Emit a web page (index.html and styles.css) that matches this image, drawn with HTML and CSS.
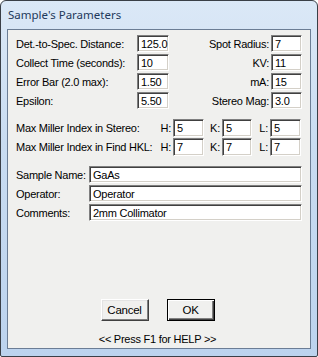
FILE: index.html
```html
<!DOCTYPE html>
<html>
<head>
<meta charset="utf-8">
<link rel="stylesheet" href="styles.css">
</head>
<body>
<div class="window">
  <div class="titlebar">Sample's Parameters</div>
  <div class="client">
    <div class="grid-top">
      <span class="lbl">Det.-to-Spec. Distance:</span><span class="field">125.0</span>
      <span class="lbl rlbl">Spot Radius:</span><span class="field">7</span>
      <span class="lbl">Collect Time (seconds):</span><span class="field">10</span>
      <span class="lbl rlbl">KV:</span><span class="field">11</span>
      <span class="lbl">Error Bar (2.0 max):</span><span class="field">1.50</span>
      <span class="lbl rlbl">mA:</span><span class="field">15</span>
      <span class="lbl">Epsilon:</span><span class="field">5.50</span>
      <span class="lbl rlbl">Stereo Mag:</span><span class="field">3.0</span>
    </div>
    <div class="grid-miller">
      <span class="lbl">Max Miller Index in Stereo:</span>
      <span class="lbl rlbl">H:</span><span class="field">5</span>
      <span class="lbl rlbl">K:</span><span class="field">5</span>
      <span class="lbl rlbl">L:</span><span class="field">5</span>
      <span class="lbl">Max Miller Index in Find HKL:</span>
      <span class="lbl rlbl">H:</span><span class="field">7</span>
      <span class="lbl rlbl">K:</span><span class="field">7</span>
      <span class="lbl rlbl">L:</span><span class="field">7</span>
    </div>
    <div class="grid-sample">
      <span class="lbl">Sample Name:</span><span class="field">GaAs</span>
      <span class="lbl">Operator:</span><span class="field">Operator</span>
      <span class="lbl">Comments:</span><span class="field">2mm Collimator</span>
    </div>
    <div class="buttons">
      <div class="btn">Cancel</div>
      <div class="btn btn-default"><span>OK</span></div>
    </div>
    <div class="help">&lt;&lt; Press F1 for HELP &gt;&gt;</div>
  </div>
</div>
</body>
</html>
```
FILE: styles.css
```css
html, body {
  margin: 0;
  padding: 0;
  background: #ffffff;
}
.window {
  width: 318px;
  height: 357px;
  box-sizing: border-box;
  border: 1px solid #3a3f47;
  border-radius: 6px 6px 2px 2px;
  background: linear-gradient(#dbe8f7, #c9dcf1 40%, #bcd3ee);
  display: flex;
  flex-direction: column;
  font-family: "Liberation Sans", Arial, sans-serif;
  font-size: 11px;
  letter-spacing: -0.25px;
  color: #000;
}
.titlebar {
  height: 28px;
  line-height: 28px;
  padding-left: 7px;
  font-family: "Noto Sans", "Open Sans", sans-serif;
  font-size: 11.5px;
  letter-spacing: 0;
  color: #1e395b;
}
.client {
  flex: 1;
  margin: 0 6px 7px 6px;
  border: 1px solid #6b7d95;
  background: #f0f0ee;
  display: flex;
  flex-direction: column;
  padding: 5px 8px 0 8px;
}
.lbl {
  display: flex;
  align-items: center;
  white-space: nowrap;
}
.rlbl {
  justify-content: flex-end;
  padding-right: 2px;
}
.field {
  box-sizing: border-box;
  background: #ffffff;
  border-top: 1px solid #7f7f7f;
  border-left: 1px solid #7f7f7f;
  border-bottom: 1px solid #ffffff;
  border-right: 1px solid #ffffff;
  box-shadow: inset 1px 1px 0 #404040, inset -1px -1px 0 #d4d0c8;
  padding: 0 2px 0 3px;
  display: flex;
  align-items: center;
  white-space: nowrap;
  overflow: hidden;
}
.grid-top {
  display: grid;
  grid-template-columns: 121px 32px 1fr 31px;
  grid-auto-rows: 17px;
  row-gap: 2px;
}
.grid-miller {
  margin-top: 10px;
  display: grid;
  grid-template-columns: 141px 16px 31px 18px 30px 18px 31px;
  grid-auto-rows: 18px;
  row-gap: 1px;
}
.grid-sample {
  margin-top: 10px;
  display: grid;
  grid-template-columns: 73px 1fr;
  grid-auto-rows: 17px;
  row-gap: 2px;
}
.buttons {
  margin-top: auto;
  display: flex;
  justify-content: center;
  gap: 18px;
  padding-right: 3px;
}
.btn {
  box-sizing: border-box;
  width: 48px;
  height: 22px;
  background: #f0f0ee;
  border-top: 1px solid #ffffff;
  border-left: 1px solid #ffffff;
  border-right: 1px solid #404040;
  border-bottom: 1px solid #404040;
  box-shadow: inset -1px -1px 0 #808080, inset 1px 1px 0 #e3e3e3;
  display: flex;
  align-items: center;
  justify-content: center;
  font-size: 11.5px;
}
.btn-default {
  border: 1px solid #000000;
  box-shadow: inset 1px 1px 0 #ffffff, inset -1px -1px 0 #404040, inset -2px -2px 0 #808080;
}
.help {
  text-align: center;
  height: 18px;
  line-height: 18px;
  padding-right: 3px;
  margin-top: 9px;
  margin-bottom: 0;
  font-size: 11px;
}
```
